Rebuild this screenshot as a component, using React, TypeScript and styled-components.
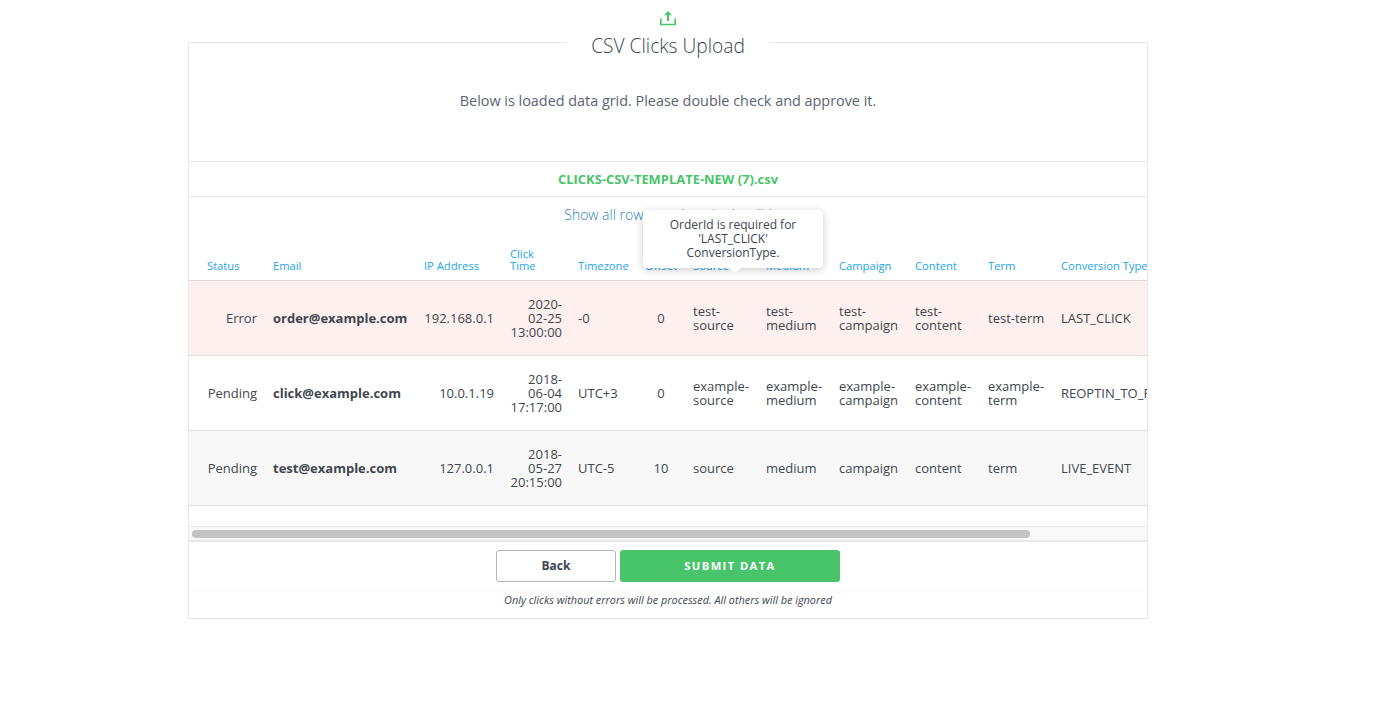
import React from 'react';
import styled, { createGlobalStyle } from 'styled-components';

const GlobalStyle = createGlobalStyle`
  html, body {
    margin: 0;
    padding: 0;
    background: #fff;
    font-family: "Open Sans", "Liberation Sans", sans-serif;
    color: #3c4650;
  }
`;

const COLUMNS = '76px 151px 86px 68px 67px 48px 73px 73px 76px 73px 73px 180px';

const Page = styled.div`
  width: 960px;
  margin-left: 188px;
  padding-top: 10px;
`;

const TopIcon = styled.div`
  display: flex;
  justify-content: center;
  height: 32px;
  color: #48c56a;

  & > svg {
    display: block;
  }
`;

const Panel = styled.section`
  border: 1px solid #e8e8e8;
  height: 577px;
  box-sizing: border-box;
  display: flex;
  flex-direction: column;
`;

const Title = styled.h1`
  align-self: center;
  margin: -10px 0 0;
  padding: 0 25px;
  background: #fff;
  font-size: 19.2px;
  line-height: 26px;
  font-weight: 300;
  color: #3c4650;
`;

const Lead = styled.p`
  margin: 0;
  padding-top: 32px;
  height: 102px;
  box-sizing: border-box;
  text-align: center;
  font-size: 14.4px;
  line-height: 20px;
  color: #5a6470;
`;

const FileName = styled.div`
  height: 36px;
  box-sizing: border-box;
  border-top: 1px solid #e8e8e8;
  border-bottom: 1px solid #e8e8e8;
  display: flex;
  align-items: center;
  justify-content: center;
  font-size: 12.95px;
  font-weight: 700;
  color: #48c56a;
`;

const TableArea = styled.div`
  position: relative;
  flex: none;
`;

const ShowAll = styled.a`
  display: block;
  height: 36px;
  padding-top: 8px;
  box-sizing: border-box;
  text-align: center;
  font-size: 14px;
  line-height: 20px;
  font-weight: 300;
  color: #2a7fb8;
`;

const Scroller = styled.div`
  overflow: hidden;
  height: 293px;
  border-bottom: 1px solid #e8e8e8;
  box-sizing: content-box;
`;

const Row = styled.div<{ $tone?: 'error' | 'muted' }>`
  display: grid;
  grid-template-columns: ${COLUMNS};
  width: 1098px;
  height: 75px;
  box-sizing: border-box;
  border-bottom: 1px solid #dfdfdf;
  align-items: center;
  background: ${(p) => (p.$tone === 'error' ? '#fdf0ee' : p.$tone === 'muted' ? '#f8f8f8' : '#fff')};
`;

const HeadRow = styled(Row)`
  height: 48px;
  align-items: end;
  padding-bottom: 8px;
  border-bottom: 1px solid #dcdcdc;
`;

const Head = styled.div<{ $first?: boolean; $center?: boolean; $wrap?: boolean }>`
  padding: 0 ${(p) => (p.$center ? '0' : '8px')} 0 ${(p) => (p.$first ? '18px' : p.$center ? '0' : '8px')};
  font-size: 11.2px;
  line-height: 12px;
  color: #1ca6ea;
  text-align: ${(p) => (p.$center ? 'center' : 'left')};
  white-space: nowrap;
  width: ${(p) => (p.$wrap ? 'min-content' : 'auto')};
  ${(p) => (p.$wrap ? 'white-space: normal;' : '')}
`;

const Cell = styled.div<{ $align?: 'right' | 'center'; $bold?: boolean; $first?: boolean }>`
  padding: 0 8px 0 ${(p) => (p.$first ? '18px' : '8px')};
  font-size: 13px;
  line-height: 14px;
  color: #40474f;
  font-weight: ${(p) => (p.$bold ? 700 : 400)};
  text-align: ${(p) => p.$align || 'left'};
`;

const Track = styled.div`
  height: 15px;
  box-sizing: border-box;
  background: #f9f9f9;
  border-bottom: 2px solid #e8e8e8;
  padding: 3px 117px 0 3px;
`;

const Thumb = styled.div`
  height: 8px;
  border-radius: 4px;
  background: #c3c3c3;
`;

const Tooltip = styled.div`
  position: absolute;
  left: 454px;
  top: 13px;
  width: 180px;
  height: 58px;
  box-sizing: border-box;
  padding: 8px 16px;
  background: #fff;
  border-radius: 4px;
  box-shadow: 0 2px 8px rgba(0, 0, 0, 0.2);
  text-align: center;
  font-size: 12px;
  line-height: 14px;
  color: #3c4650;

  &::after {
    content: '';
    position: absolute;
    left: 86px;
    bottom: -5px;
    border-left: 6px solid transparent;
    border-right: 6px solid transparent;
    border-top: 5px solid #fff;
  }
`;

const Actions = styled.div`
  display: flex;
  justify-content: center;
  gap: 4px;
  padding-top: 8px;
  height: 49px;
  box-sizing: border-box;
  border-bottom: 1px solid #fafafa;
`;

const BackButton = styled.button`
  width: 120px;
  height: 32px;
  padding: 0 0 2px;
  background: #fff;
  border: 1px solid #b4b4b4;
  border-radius: 3px;
  font-family: inherit;
  font-size: 12px;
  font-weight: 700;
  color: #3c4650;
`;

const SubmitButton = styled.button`
  width: 220px;
  height: 32px;
  padding: 0 0 2px;
  background: #48c56a;
  border: none;
  border-radius: 3px;
  font-family: inherit;
  font-size: 11.2px;
  font-weight: 700;
  letter-spacing: 1.4px;
  color: #fff;
`;

const Note = styled.p`
  margin: 0;
  padding-top: 1px;
  text-align: center;
  font-size: 10.85px;
  line-height: 16px;
  font-style: italic;
  color: #3c4650;
`;

const heads = [
  'Status', 'Email', 'IP Address', 'Click Time', 'Timezone', 'Offset', 'Source',
  'Medium', 'Campaign', 'Content', 'Term', 'Conversion Type',
];

const rows = [
  {
    tone: 'error' as const,
    values: ['Error', 'order@example.com', '192.168.0.1', '2020-02-25 13:00:00', '-0', '0', 'test-source', 'test-medium', 'test-campaign', 'test-content', 'test-term', 'LAST_CLICK'],
  },
  {
    values: ['Pending', 'click@example.com', '10.0.1.19', '2018-06-04 17:17:00', 'UTC+3', '0', 'example-source', 'example-medium', 'example-campaign', 'example-content', 'example-term', 'REOPTIN_TO_PURCHASE'],
  },
  {
    tone: 'muted' as const,
    values: ['Pending', 'test@example.com', '127.0.0.1', '2018-05-27 20:15:00', 'UTC-5', '10', 'source', 'medium', 'campaign', 'content', 'term', 'LIVE_EVENT'],
  },
];

const alignFor = (i: number): 'right' | 'center' | undefined => {
  if (i === 0 || i === 2 || i === 3) return 'right';
  if (i === 5) return 'center';
  return undefined;
};

const App = () => (
  <>
    <GlobalStyle />
    <Page>
      <TopIcon>
        <svg width="16" height="16" viewBox="0 0 16 16" fill="none">
          <path d="M8 1 4 5.2h3V11h2V5.2h3z" fill="currentColor" />
          <path d="M.8 8.5v6h14.4v-6" stroke="currentColor" strokeWidth="1.6" />
        </svg>
      </TopIcon>
      <Panel>
        <Title>CSV Clicks Upload</Title>
        <Lead>Below is loaded data grid. Please double check and approve it.</Lead>
        <FileName>CLICKS-CSV-TEMPLATE-NEW (7).csv</FileName>
        <TableArea>
          <ShowAll>Show all rows, not just the invalid</ShowAll>
          <Scroller>
            <HeadRow>
              {heads.map((h, i) => (
                <Head key={h} $first={i === 0} $center={i === 5} $wrap={i === 3}>{h}</Head>
              ))}
            </HeadRow>
            {rows.map((r) => (
              <Row key={r.values[1]} $tone={r.tone}>
                {r.values.map((v, i) => (
                  <Cell key={i} $first={i === 0} $align={alignFor(i)} $bold={i === 1}>{v}</Cell>
                ))}
              </Row>
            ))}
          </Scroller>
          <Track><Thumb /></Track>
          <Tooltip>OrderId is required for 'LAST_CLICK' ConversionType.</Tooltip>
        </TableArea>
        <Actions>
          <BackButton>Back</BackButton>
          <SubmitButton>SUBMIT DATA</SubmitButton>
        </Actions>
        <Note>Only clicks without errors will be processed. All others will be ignored</Note>
      </Panel>
    </Page>
  </>
);

export default App;
